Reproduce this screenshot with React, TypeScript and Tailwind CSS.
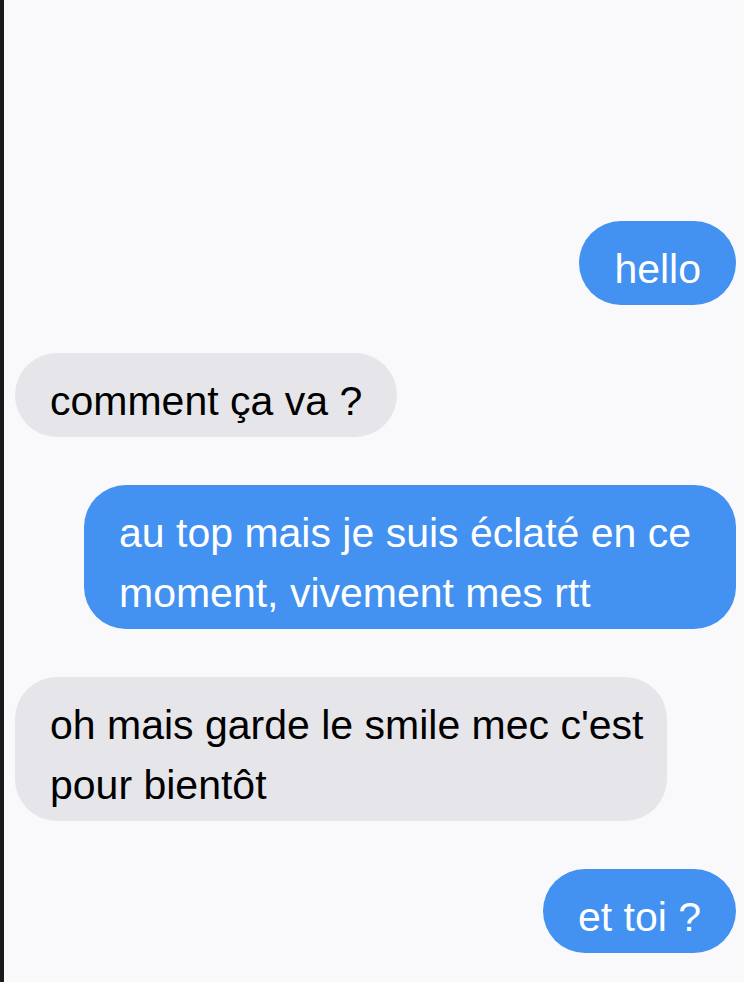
const MESSAGES = [
  { from: "me", lines: ["hello"] },
  { from: "them", lines: ["comment ça va ?"] },
  { from: "me", lines: ["au top mais je suis éclaté en ce", "moment, vivement mes rtt"] },
  { from: "them", lines: ["oh mais garde le smile mec c'est", "pour bientôt"] },
  { from: "me", lines: ["et toi ?"] },
] as const;

function Bubble({ from, lines }: { from: "me" | "them"; lines: readonly string[] }) {
  const mine = from === "me";
  const wide = lines.length > 1;
  return (
    <div className={`flex ${mine ? "justify-end" : "justify-start"}`}>
      <div
        className={`rounded-[42px] pt-[18px] pb-[6px] text-[41px] leading-[60px] whitespace-nowrap ${
          wide ? "w-[652px] px-[35px]" : "px-[35px]"
        } ${mine ? "bg-[#4391f0] text-white" : "bg-[#e6e5ea] text-black"}`}
      >
        {lines.map((line, i) => (
          <div key={i}>{line}</div>
        ))}
      </div>
    </div>
  );
}

export default function App() {
  return (
    <div
      className="flex h-screen flex-col justify-end gap-12 border-l-4 border-[#1a1a1a] bg-[#f9f9fc] pr-2 pb-[29px] pl-[11px]"
      style={{ fontFamily: '"Liberation Sans", Arial, sans-serif' }}
    >
      {MESSAGES.map((m, i) => (
        <Bubble key={i} from={m.from} lines={m.lines} />
      ))}
    </div>
  );
}
